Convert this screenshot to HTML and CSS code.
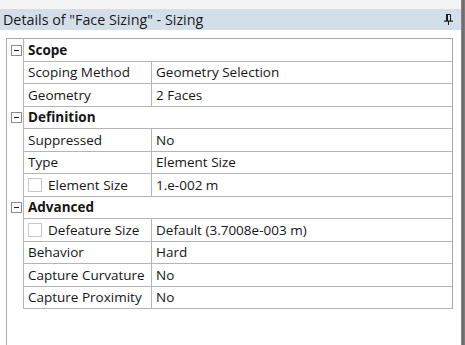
FILE: index.html
```html
<!DOCTYPE html>
<html>
<head>
<meta charset="utf-8">
<link rel="stylesheet" href="styles.css">
</head>
<body>
<div class="window">
  <div class="main">
    <div class="topstrip"></div>
    <div class="titlebar">
      <span class="title">Details of "Face Sizing" - Sizing</span>
      <svg class="pin" width="9" height="11" viewBox="0 0 9 11">
        <path d="M2.5 0.5 H6.5 V7 M2.5 0.5 V7" fill="none" stroke="#1a1a1a" stroke-width="1"/>
        <rect x="2" y="0" width="2" height="7" fill="#1a1a1a"/>
        <rect x="0" y="6.5" width="9" height="1.2" fill="#1a1a1a"/>
        <rect x="4" y="7" width="1" height="4" fill="#1a1a1a"/>
      </svg>
    </div>
    <div class="gap"></div>
    <div class="panel">
      <div class="props">
        <div class="gut"><span class="minus"></span></div>
        <div class="cat">Scope</div>

        <div class="gut"></div>
        <div class="name">Scoping Method</div>
        <div class="val">Geometry Selection</div>

        <div class="gut"></div>
        <div class="name">Geometry</div>
        <div class="val">2 Faces</div>

        <div class="gut"><span class="minus"></span></div>
        <div class="cat">Definition</div>

        <div class="gut"></div>
        <div class="name">Suppressed</div>
        <div class="val">No</div>

        <div class="gut"></div>
        <div class="name">Type</div>
        <div class="val">Element Size</div>

        <div class="gut"></div>
        <div class="name"><span class="chk"></span>Element Size</div>
        <div class="val">1.e-002 m</div>

        <div class="gut"><span class="minus"></span></div>
        <div class="cat">Advanced</div>

        <div class="gut"></div>
        <div class="name"><span class="chk"></span>Defeature Size</div>
        <div class="val">Default (3.7008e-003 m)</div>

        <div class="gut"></div>
        <div class="name">Behavior</div>
        <div class="val">Hard</div>

        <div class="gut"></div>
        <div class="name">Capture Curvature</div>
        <div class="val">No</div>

        <div class="gut"></div>
        <div class="name">Capture Proximity</div>
        <div class="val">No</div>
      </div>
    </div>
  </div>
  <div class="edge"></div>
</div>
</body>
</html>
```
FILE: styles.css
```css
html, body {
  margin: 0;
  padding: 0;
  width: 465px;
  height: 345px;
  overflow: hidden;
  background: #ffffff;
  font-family: "Open Sans", "Noto Sans", sans-serif;
  font-size: 13.5px;
  color: #161616;
}
.window {
  display: flex;
  height: 345px;
}
.main {
  width: 461px;
  display: flex;
  flex-direction: column;
  background: #ffffff;
}
.edge {
  width: 4px;
  background: linear-gradient(to right, #9a9a9a 0, #6e6e6e 1px, #6e6e6e 3px, #8a8a8a 4px);
}
.topstrip {
  height: 9px;
  background: #f4f4f4;
}
.titlebar {
  height: 21px;
  background: #d4dee8;
  display: flex;
  align-items: center;
  justify-content: space-between;
  padding: 0 8px 0 3px;
}
.title {
  font-size: 14.3px;
  color: #1a1a1a;
  line-height: 21px;
}
.pin {
  display: block;
}
.gap {
  height: 8px;
}
.panel {
  flex: 1;
  margin-left: 6px;
  width: 447px;
  border-left: 1px solid #a9a9a9;
  box-sizing: border-box;
  display: flex;
  flex-direction: column;
}
.props {
  display: grid;
  grid-template-columns: 16px 129px 301px;
  grid-auto-rows: 22.5px;
  border-top: 1px solid #a9a9a9;
}
.gut {
  display: flex;
  align-items: center;
  justify-content: center;
  padding-left: 2px;
}
.minus {
  width: 9px;
  height: 9px;
  border: 1px solid #8c8c8c;
  background: #ffffff;
  position: relative;
  display: block;
}
.minus::after {
  content: "";
  position: absolute;
  left: 2px;
  top: 4px;
  width: 5px;
  height: 1px;
  background: #1e1e1e;
}
.cat, .name, .val {
  border-bottom: 1px solid #b5b5b5;
  border-right: 1px solid #b5b5b5;
  display: flex;
  align-items: center;
  padding-left: 4px;
  white-space: nowrap;
  box-sizing: border-box;
}
.cat {
  grid-column: 2 / span 2;
  border-left: 1px solid #b5b5b5;
  font-weight: bold;
  border-right-color: #a9a9a9;
}
.name {
  border-left: 1px solid #b5b5b5;
}
.val {
  border-right-color: #a9a9a9;
}
.chk {
  width: 14px;
  height: 14px;
  border: 1px solid #c8c8c8;
  box-sizing: border-box;
  margin-right: 6px;
  background: #ffffff;
}
```
